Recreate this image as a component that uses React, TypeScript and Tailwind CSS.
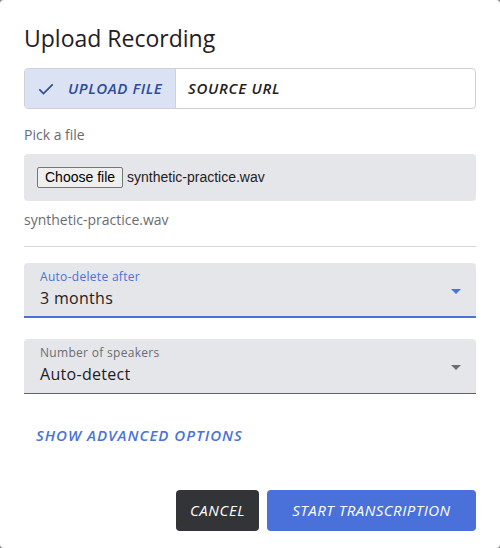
import React from 'react';

const font = { fontFamily: '"Open Sans", "Noto Sans", sans-serif' };

function Caret({ className }: { className: string }) {
  return (
    <svg viewBox="0 0 10 5" className={className} aria-hidden>
      <path d="M0 0 L10 0 L5 5 Z" fill="currentColor" />
    </svg>
  );
}

function SelectField({ label, value, focused }: { label: string; value: string; focused?: boolean }) {
  return (
    <div
      className={
        'relative h-[55px] rounded-t-[4px] bg-[#e5e6ea] px-4 pt-[6px] ' +
        (focused ? 'border-b-2 border-[#4a72d9]' : 'border-b border-[#5f6068]')
      }
    >
      <div
        className={
          'text-[12px] leading-[16px] tracking-[0.3px] ' + (focused ? 'text-[#4a72d9]' : 'text-[#6b6c72]')
        }
      >
        {label}
      </div>
      <div className="mt-[2px] text-[16px] leading-[22px] tracking-[0.3px] text-[#1f2023]">{value}</div>
      <Caret
        className={
          'absolute right-[15px] top-[26px] h-[5px] w-[10px] ' + (focused ? 'text-[#4a72d9]' : 'text-[#6b6c72]')
        }
      />
    </div>
  );
}

export default function App() {
  return (
    <div className="min-h-[548px] w-[500px] bg-[#8a8a8a]" style={font}>
      <div className="flex h-[548px] flex-col rounded-[4px] bg-white px-6">
        <h1 className="pt-[23px] text-[23px] leading-[30px] text-[#1f2023]">Upload Recording</h1>

        {/* source toggle */}
        <div className="mt-[15px] flex h-[41px] overflow-hidden rounded-[4px] border border-[#cfd1d8]">
          <button className="flex w-[151px] items-center gap-[12px] border-r border-[#cfd1d8] bg-[#dae2f4] pl-[11px] text-[15px] font-semibold italic tracking-[0.6px] text-[#2e4a9a]">
            <svg viewBox="0 0 24 24" className="h-[20px] w-[20px]" fill="none" stroke="currentColor" strokeWidth="2">
              <path d="M4 12.5l5 5L20 6.5" />
            </svg>
            UPLOAD FILE
          </button>
          <button className="flex items-center pl-[12px] text-[15px] font-semibold italic tracking-[0.7px] text-[#1f2023]">
            SOURCE URL
          </button>
        </div>

        <div className="mt-[16px] text-[14px] leading-[20px] text-[#6b6c72]">Pick a file</div>

        {/* file input */}
        <div
          className="mt-[9px] flex h-[47px] items-center rounded-[4px] bg-[#e5e6ea] pl-[13px]"
          style={{ fontFamily: '"Liberation Sans", Arial, sans-serif' }}
        >
          <span className="flex h-[21px] items-center rounded-[2px] border border-[#767676] bg-[#efefef] px-[7px] text-[14px] text-black">
            Choose file
          </span>
          <span className="ml-[4px] text-[14px] text-[#1f2023]">synthetic-practice.wav</span>
        </div>

        <div className="mt-[9px] text-[14px] leading-[20px] text-[#6b6c72]">synthetic-practice.wav</div>

        <div className="mt-[16px] h-px bg-[#d6d7dc]" />

        <div className="mt-[16px]">
          <SelectField label="Auto-delete after" value="3 months" focused />
        </div>
        <div className="mt-[21px]">
          <SelectField label="Number of speakers" value="Auto-detect" />
        </div>

        <button className="mt-[30px] self-start pl-[12px] text-[15px] font-semibold italic tracking-[1px] text-[#4a72d9]">
          SHOW ADVANCED OPTIONS
        </button>

        <div className="mt-auto mb-[17px] flex justify-end gap-2">
          <button className="h-[41px] w-[83px] rounded-[4px] bg-[#333438] text-[15px] font-medium italic tracking-[0.6px] text-white">
            CANCEL
          </button>
          <button className="h-[41px] w-[209px] rounded-[4px] bg-[#4a70d9] text-[15px] font-medium italic tracking-[0.5px] text-white">
            START TRANSCRIPTION
          </button>
        </div>
      </div>
    </div>
  );
}
